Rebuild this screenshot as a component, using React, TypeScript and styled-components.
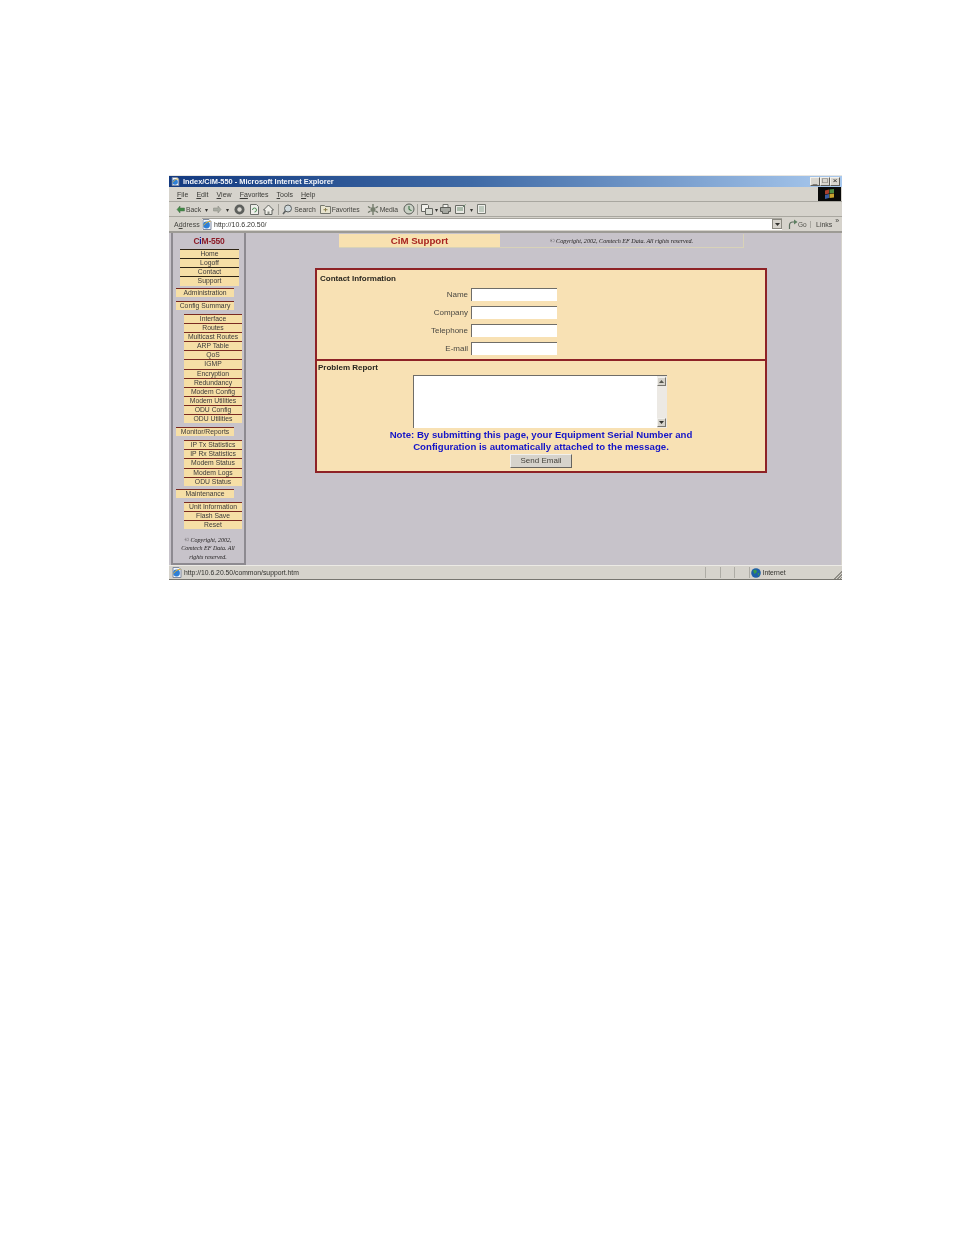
import React, { FunctionComponent } from 'react';
import styled, { createGlobalStyle } from 'styled-components';

const GlobalStyle = createGlobalStyle`
    html, body {
        margin: 0;
        padding: 0;
        background: #ffffff;
    }
    body {
        font-family: "Liberation Sans", Arial, sans-serif;
    }
`;

const MAIN_LINKS = ['Home', 'Logoff', 'Contact', 'Support'];
const CONFIG_LINKS = [
    'Interface',
    'Routes',
    'Multicast Routes',
    'ARP Table',
    'QoS',
    'IGMP',
    'Encryption',
    'Redundancy',
    'Modem Config',
    'Modem Utilities',
    'ODU Config',
    'ODU Utilities',
];
const MONITOR_LINKS = ['IP Tx Statistics', 'IP Rx Statistics', 'Modem Status', 'Modem Logs', 'ODU Status'];
const MAINTENANCE_LINKS = ['Unit Information', 'Flash Save', 'Reset'];
const CONTACT_FIELDS = ['Name', 'Company', 'Telephone', 'E-mail'];
const MENU_ITEMS = [
    ['F', 'ile'],
    ['E', 'dit'],
    ['V', 'iew'],
    ['Fa', 'vorites'],
    ['T', 'ools'],
    ['H', 'elp'],
];

const PageIcon: FunctionComponent = () => (
    <svg width="10" height="11" viewBox="0 0 10 11">
        <path d="M1 .5h6l2 2v8H1z" fill="#f4f6fb" stroke="#7f8aa0" />
        <circle cx="4.5" cy="6" r="3.4" fill="#2f7fd6" />
        <path d="M1.5 6.5c2-3 5-4.500 7-4" fill="none" stroke="#e0b030" />
    </svg>
);

const BackIcon: FunctionComponent = () => (
    <svg width="9" height="9" viewBox="0 0 9 9">
        <path d="M4 1 1 4.500 4 8V6h4.500V3H4z" fill="#3f8a44" stroke="#4c6f4e" strokeWidth=".5" />
    </svg>
);

const ForwardIcon: FunctionComponent = () => (
    <svg width="9" height="9" viewBox="0 0 9 9">
        <path d="M5 1l3 3.500L5 8V6H.5V3H5z" fill="#a9aca3" stroke="#85877f" strokeWidth=".5" />
    </svg>
);

const StopIcon: FunctionComponent = () => (
    <svg width="11" height="11" viewBox="0 0 11 11">
        <circle cx="5.500" cy="5.500" r="5" fill="#5d5f5c" />
        <circle cx="5.500" cy="5.500" r="2.200" fill="#d8d6cf" />
    </svg>
);

const RefreshIcon: FunctionComponent = () => (
    <svg width="11" height="11" viewBox="0 0 11 11">
        <path d="M1.500.5h6l2 2v8h-8z" fill="#eeeeea" stroke="#6c6e6a" />
        <path d="M3.500 6a2 2 0 1 1 2 2" fill="none" stroke="#4d8f55" />
    </svg>
);

const HomeIcon: FunctionComponent = () => (
    <svg width="11" height="11" viewBox="0 0 11 11">
        <path d="M5.500 1 .5 6h1.500v4.500h7V6h1.500z" fill="#f0efe9" stroke="#5e605c" />
        <path d="M4.500 10.500v-3h2v3" fill="#8a8c85" />
    </svg>
);

const SearchIcon: FunctionComponent = () => (
    <svg width="11" height="11" viewBox="0 0 11 11">
        <circle cx="6" cy="4.500" r="3.500" fill="#cfd9dc" stroke="#5b5f5f" />
        <path d="M3.500 7 1 10" stroke="#5b5f5f" strokeWidth="1.600" />
    </svg>
);

const FavoritesIcon: FunctionComponent = () => (
    <svg width="11" height="10" viewBox="0 0 11 10">
        <path d="M.5 1.500h4l1 1h5v7h-10z" fill="#e8e4cf" stroke="#75776f" />
        <path d="M5.500 4v3.500M3.500 5.700h4" stroke="#8a7f4e" />
    </svg>
);

const MediaIcon: FunctionComponent = () => (
    <svg width="12" height="11" viewBox="0 0 12 11">
        <circle cx="6" cy="5.500" r="2.500" fill="#77806f" />
        <path d="M6 0v3M6 8v3M1 2.500l2.500 1.500M11 8.500 8.500 7M1 8.500 3.500 7M11 2.500 8.500 4" stroke="#6c7465" strokeWidth="1.300" />
    </svg>
);

const HistoryIcon: FunctionComponent = () => (
    <svg width="12" height="12" viewBox="0 0 12 12">
        <circle cx="6" cy="6" r="5" fill="#c9d0c4" stroke="#5a5d58" />
        <path d="M6 3v3.500l2.500 1" fill="none" stroke="#2f6b3a" />
    </svg>
);

const MailIcon: FunctionComponent = () => (
    <svg width="12" height="11" viewBox="0 0 12 11">
        <path d="M.5.500h6l1 1v6h-7z" fill="#f2f1ec" stroke="#666862" />
        <path d="M4.500 4.500h7v6h-7z" fill="#d9dbd3" stroke="#666862" />
    </svg>
);

const PrintIcon: FunctionComponent = () => (
    <svg width="11" height="10" viewBox="0 0 11 10">
        <path d="M3 .5h5v3H3z" fill="#f3f3ef" stroke="#6f716b" />
        <path d="M.5 3.500h10v4h-2v2h-6v-2h-2z" fill="#a6a8a1" stroke="#5d5f59" />
    </svg>
);

const EditIcon: FunctionComponent = () => (
    <svg width="11" height="10" viewBox="0 0 11 10">
        <path d="M.5 1.500h9v8h-9z" fill="#e9e9e4" stroke="#6a6c66" />
        <path d="M2 4h6M2 6h6M8 3l2.500-2.500" stroke="#6d8d71" />
    </svg>
);

const DiscussIcon: FunctionComponent = () => (
    <svg width="9" height="10" viewBox="0 0 9 10">
        <path d="M.5.500h8v9h-8z" fill="#eeeeea" stroke="#777972" />
        <path d="M2 3h5M2 5h5M2 7h5" stroke="#8fa591" />
    </svg>
);

const GoIcon: FunctionComponent = () => (
    <svg width="10" height="11" viewBox="0 0 10 11">
        <path d="M1.500 10V6a3 3 0 0 1 3-3h3" fill="none" stroke="#5c6f5f" strokeWidth="1.200" />
        <path d="M6 .5 9.500 3 6 5.500z" fill="#5c7f60" />
    </svg>
);

const GlobeIcon: FunctionComponent = () => (
    <svg width="10" height="10" viewBox="0 0 10 10">
        <circle cx="5" cy="5" r="4.800" fill="#1d5fa8" />
        <path d="M2 2.500 5 1.500 6 4 3.500 6zM6.500 5.500 8.500 5 7.500 8z" fill="#3d9a46" />
    </svg>
);

const FlagIcon: FunctionComponent = () => (
    <svg width="11" height="10" viewBox="0 0 11 10">
        <path d="M1 1.500 5 .5v4l-4 1z" fill="#a8402f" />
        <path d="M5.500.5 10 0v4l-4.500.5z" fill="#4e8c42" />
        <path d="M1 6l4-1v4l-4 1z" fill="#3a5ca0" />
        <path d="M5.500 5 10 4.500v4L5.500 9z" fill="#c8a22e" />
    </svg>
);

const ArrowUp: FunctionComponent = () => (
    <svg width="5" height="3" viewBox="0 0 5 3">
        <path d="M2.500 0 5 3H0z" fill="#55564f" />
    </svg>
);

const ArrowDown: FunctionComponent = () => (
    <svg width="5" height="3" viewBox="0 0 5 3">
        <path d="M0 0h5L2.500 3z" fill="#33332f" />
    </svg>
);

const NavGroup: FunctionComponent<{ links: string[]; $kind: 'main' | 'sub' }> = ({ links, $kind }) => (
    <NavList $kind={$kind}>
        {links.map((link) => (
            <NavLink key={link} $kind={$kind}>
                {link}
            </NavLink>
        ))}
    </NavList>
);

export default function App() {
    return (
        <Page>
            <GlobalStyle />
            <BrowserWindow>
                <TitleBar>
                    <TitleText>
                        <PageIcon />
                        Index/CiM-550 - Microsoft Internet Explorer
                    </TitleText>
                    <WindowButtons>
                        <WindowButton>_</WindowButton>
                        <WindowButton>□</WindowButton>
                        <WindowButton>×</WindowButton>
                    </WindowButtons>
                </TitleBar>
                <MenuBar>
                    {MENU_ITEMS.map(([key, rest]) => (
                        <MenuItem key={key}>
                            <u>{key}</u>
                            {rest}
                        </MenuItem>
                    ))}
                    <Throbber>
                        <FlagIcon />
                    </Throbber>
                </MenuBar>
                <ToolBar>
                    <ToolButton><BackIcon />Back</ToolButton>
                    <DropCaret>▾</DropCaret>
                    <ToolButton $gap={5}><ForwardIcon /></ToolButton>
                    <DropCaret>▾</DropCaret>
                    <ToolButton $gap={5}><StopIcon /></ToolButton>
                    <ToolButton $gap={4}><RefreshIcon /></ToolButton>
                    <ToolButton $gap={3}><HomeIcon /></ToolButton>
                    <ToolSeparator $left={4} />
                    <ToolButton><SearchIcon />Search</ToolButton>
                    <ToolButton $gap={4}><FavoritesIcon />Favorites</ToolButton>
                    <ToolButton $gap={7}><MediaIcon />Media</ToolButton>
                    <ToolButton $gap={5}><HistoryIcon /></ToolButton>
                    <ToolSeparator $left={2} />
                    <ToolButton><MailIcon /></ToolButton>
                    <DropCaret $gap={2}>▾</DropCaret>
                    <ToolButton $gap={2}><PrintIcon /></ToolButton>
                    <ToolButton $gap={4}><EditIcon /></ToolButton>
                    <DropCaret>▾</DropCaret>
                    <ToolButton $gap={4}><DiscussIcon /></ToolButton>
                </ToolBar>
                <AddressBar>
                    <AddressLabel>
                        A<u>d</u>dress
                    </AddressLabel>
                    <AddressField>
                        <PageIcon />
                        http://10.6.20.50/
                        <ComboButton><ArrowDown /></ComboButton>
                    </AddressField>
                    <GoButton><GoIcon />Go</GoButton>
                    <LinksButton>Links<sup>»</sup></LinksButton>
                </AddressBar>
                <Viewport>
                    <Sidebar>
                        <Brand>
                            C<BrandSlash>i</BrandSlash>M-550
                        </Brand>
                        <NavGroup links={MAIN_LINKS} $kind="main" />
                        <SectionLink $top={2.5}>Administration</SectionLink>
                        <SectionLink $top={4}>Config Summary</SectionLink>
                        <NavGroup links={CONFIG_LINKS} $kind="sub" />
                        <SectionLink $top={4}>Monitor/Reports</SectionLink>
                        <NavGroup links={MONITOR_LINKS} $kind="sub" />
                        <SectionLink $top={3}>Maintenance</SectionLink>
                        <NavGroup links={MAINTENANCE_LINKS} $kind="sub" />
                        <SideCopyright>© Copyright, 2002, Comtech EF Data. All rights reserved.</SideCopyright>
                    </Sidebar>
                    <Main>
                        <HeaderStrip>
                            <PageTitle>CiM Support</PageTitle>
                            <HeaderCopyright>© Copyright, 2002, Comtech EF Data. All rights reserved.</HeaderCopyright>
                        </HeaderStrip>
                        <FormBox>
                            <ContactSection>
                                <ContactHeading>Contact Information</ContactHeading>
                                <FieldGrid>
                                    {CONTACT_FIELDS.map((field) => (
                                        <React.Fragment key={field}>
                                            <FieldLabel>{field}</FieldLabel>
                                            <TextInput />
                                        </React.Fragment>
                                    ))}
                                </FieldGrid>
                            </ContactSection>
                            <ReportSection>
                                <ReportHeading>Problem Report</ReportHeading>
                                <TextArea>
                                    <ScrollTrack>
                                        <ScrollButton><ArrowUp /></ScrollButton>
                                        <ScrollButton><ArrowDown /></ScrollButton>
                                    </ScrollTrack>
                                </TextArea>
                                <Note>
                                    Note: By submitting this page, your Equipment Serial Number and
                                    <br />
                                    Configuration is automatically attached to the message.
                                </Note>
                                <SendButton>Send Email</SendButton>
                            </ReportSection>
                        </FormBox>
                    </Main>
                </Viewport>
                <StatusBar>
                    <StatusUrl>
                        <PageIcon />
                        http://10.6.20.50/common/support.htm
                    </StatusUrl>
                    <StatusCell />
                    <StatusCell />
                    <StatusCell />
                    <ZoneCell>
                        <GlobeIcon />
                        Internet
                    </ZoneCell>
                    <Grip />
                </StatusBar>
            </BrowserWindow>
        </Page>
    );
}

const Page = styled.div`
    width: 954px;
    height: 1235px;
    box-sizing: border-box;
    padding: 175px 0 0 169px;
    overflow: hidden;
`;

const BrowserWindow = styled.div`
    width: 673px;
    height: 405px;
    box-sizing: border-box;
    display: flex;
    flex-direction: column;
    background: #d6d3cc;
    border-top: 1px solid #e8e6e1;
    border-bottom: 1px solid #77756f;
    color: #33332f;
    font-size: 7px;
    filter: blur(0.4px);
`;

const TitleBar = styled.div`
    height: 11px;
    flex: none;
    display: flex;
    align-items: center;
    justify-content: space-between;
    padding: 0 2px;
    background: linear-gradient(90deg, #133a80 0%, #3f6aa6 45%, #a9c9ee 100%);
`;

const TitleText = styled.div`
    display: flex;
    align-items: center;
    gap: 3px;
    font-size: 7.400px;
    font-weight: 700;
    color: #f4f6fa;
    & > svg {
        width: 9px;
        height: 9px;
    }
`;

const WindowButtons = styled.div`
    display: flex;
    gap: 0;
`;

const WindowButton = styled.div`
    width: 10px;
    height: 9px;
    box-sizing: border-box;
    background: #d8d5ce;
    border: 1px solid;
    border-color: #f2f1ed #5f5e59 #5f5e59 #f2f1ed;
    color: #1c1c1a;
    font-size: 8px;
    line-height: 6px;
    text-align: center;
`;

const MenuBar = styled.div`
    height: 15px;
    flex: none;
    box-sizing: border-box;
    display: flex;
    align-items: center;
    padding-left: 8px;
    gap: 8.100px;
    position: relative;
    border-bottom: 1px solid #a9a7a0;
`;

const MenuItem = styled.span`
    font-size: 7px;
    color: #3b3b37;
`;

const Throbber = styled.div`
    width: 23px;
    height: 14px;
    position: absolute;
    right: 1px;
    top: 0;
    background: #090908;
    display: flex;
    align-items: center;
    justify-content: center;
`;

const ToolBar = styled.div`
    height: 15px;
    flex: none;
    box-sizing: border-box;
    display: flex;
    align-items: center;
    padding-left: 7px;
    border-bottom: 1px solid #a9a7a0;
`;

const ToolButton = styled.div<{ $gap?: number }>`
    display: flex;
    align-items: center;
    gap: 1px;
    margin-left: ${({ $gap }) => $gap ?? 0}px;
    font-size: 6.800px;
    color: #44443f;
`;

const DropCaret = styled.span<{ $gap?: number }>`
    margin-left: ${({ $gap }) => $gap ?? 4}px;
    font-size: 6px;
    color: #33332f;
`;

const ToolSeparator = styled.div<{ $left: number }>`
    width: 1px;
    height: 11px;
    margin: 0 3px 0 ${({ $left }) => $left}px;
    background: #a3a19a;
`;

const AddressBar = styled.div`
    height: 16px;
    flex: none;
    box-sizing: border-box;
    display: flex;
    align-items: center;
    padding-left: 5px;
    border-bottom: 2px solid #9d9b95;
`;

const AddressLabel = styled.span`
    width: 28px;
    flex: none;
    font-size: 7px;
    color: #44443f;
`;

const AddressField = styled.div`
    width: 580px;
    height: 12px;
    flex: none;
    box-sizing: border-box;
    display: flex;
    align-items: center;
    gap: 2px;
    position: relative;
    background: #ffffff;
    font-size: 7px;
    color: #33332f;
    border-top: 1px solid #a6a49d;
`;

const ComboButton = styled.div`
    width: 10px;
    height: 10px;
    position: absolute;
    right: 0;
    top: 0;
    background: #d6d3cc;
    border: 1px solid #8a8880;
    box-sizing: border-box;
    display: flex;
    align-items: center;
    justify-content: center;
`;

const GoButton = styled.div`
    width: 22px;
    flex: none;
    display: flex;
    align-items: center;
    gap: 0;
    margin-left: 6px;
    font-size: 6.500px;
    color: #55554f;
`;

const LinksButton = styled.div`
    flex: none;
    padding-left: 5px;
    border-left: 1px solid #a9a7a0;
    font-size: 7px;
    color: #44443f;
    & > sup {
        font-size: 7px;
        line-height: 0;
        margin-left: 3px;
    }
`;

const Viewport = styled.div`
    flex: 1;
    min-height: 0;
    display: flex;
    background: #c7c3ca;
    border-right: 1px solid #d6d3cc;
`;

const Sidebar = styled.aside`
    width: 75px;
    flex: none;
    box-sizing: border-box;
    margin-left: 2px;
    display: flex;
    flex-direction: column;
    border-style: solid;
    border-color: #8d8a90;
    border-width: 0 2px 2px 2px;
    padding-top: 3px;
    color: #3c3a3a;
`;

const Brand = styled.div`
    width: 64px;
    margin-left: 4px;
    text-align: center;
    font-size: 8.500px;
    font-weight: 700;
    line-height: 10px;
    color: #8c1c28;
    letter-spacing: -0.2px;
`;

const BrandSlash = styled.span`
    color: #1a1a96;
`;

const NavList = styled.div<{ $kind: 'main' | 'sub' }>`
    display: flex;
    flex-direction: column;
    width: ${({ $kind }) => ($kind === 'main' ? 59 : 58)}px;
    margin-left: ${({ $kind }) => ($kind === 'main' ? 7 : 11)}px;
    margin-top: ${({ $kind }) => ($kind === 'main' ? 3 : 3.7)}px;
`;

const NavLink = styled.div<{ $kind: 'main' | 'sub' }>`
    height: 9.150px;
    box-sizing: border-box;
    border-top: 1px solid ${({ $kind }) => ($kind === 'main' ? '#2e2414' : '#7a2a22')};
    background: #f6dfa6;
    font-size: 6.800px;
    line-height: 8px;
    text-align: center;
    white-space: nowrap;
`;

const SectionLink = styled.div<{ $top: number }>`
    width: 58px;
    height: 9px;
    margin: ${({ $top }) => $top}px 0 0 3px;
    box-sizing: border-box;
    border-top: 1px solid #7a2a22;
    background: #f6dfa6;
    font-size: 6.800px;
    line-height: 8px;
    text-align: center;
    white-space: nowrap;
`;

const SideCopyright = styled.div`
    width: 60px;
    margin: 7px 0 0 5px;
    font-family: "Liberation Serif", "Times New Roman", serif;
    font-style: italic;
    font-size: 6px;
    line-height: 8.500px;
    text-align: center;
    color: #1c1a1a;
`;

const Main = styled.main`
    flex: 1;
    min-width: 0;
    padding: 1px 0 0 69px;
`;

const HeaderStrip = styled.div`
    width: 405px;
    height: 14px;
    margin-left: 24px;
    display: flex;
    box-sizing: border-box;
    border-right: 1px solid #d8d2b8;
    border-bottom: 1px solid #d8d2b8;
`;

const PageTitle = styled.div`
    width: 161px;
    flex: none;
    background: #f8e1b0;
    color: #a82420;
    font-size: 9.700px;
    font-weight: 700;
    line-height: 13px;
    text-align: center;
`;

const HeaderCopyright = styled.div`
    flex: 1;
    font-family: "Liberation Serif", "Times New Roman", serif;
    font-style: italic;
    font-size: 6.100px;
    line-height: 14px;
    text-align: center;
    color: #1c1a1a;
`;

const FormBox = styled.section`
    width: 452px;
    height: 205px;
    margin-top: 20px;
    box-sizing: border-box;
    display: flex;
    flex-direction: column;
    background: #f8e1b4;
    border: 2px solid #8e2226;
    color: #44423c;
`;

const ContactSection = styled.div`
    height: 91px;
    flex: none;
    box-sizing: border-box;
    padding: 4px 0 0 3px;
    border-bottom: 2px solid #8e2226;
`;

const ContactHeading = styled.div`
    font-size: 8px;
    font-weight: 700;
    line-height: 9px;
    color: #2a2720;
`;

const FieldGrid = styled.div`
    display: grid;
    grid-template-columns: 148px 86px;
    grid-auto-rows: 18.200px;
    column-gap: 3px;
    margin-top: 2px;
    align-items: center;
`;

const FieldLabel = styled.div`
    font-size: 8px;
    text-align: right;
    color: #4a4842;
`;

const TextInput = styled.div`
    height: 13px;
    box-sizing: border-box;
    background: #ffffff;
    border-top: 1px solid #6f6d68;
    border-left: 1px solid #6f6d68;
`;

const ReportSection = styled.div`
    flex: 1;
    min-height: 0;
    display: flex;
    flex-direction: column;
    align-items: center;
    position: relative;
`;

const ReportHeading = styled.div`
    align-self: flex-start;
    margin: 2px 0 0 1px;
    font-size: 8px;
    font-weight: 700;
    line-height: 9px;
    color: #2a2720;
`;

const TextArea = styled.div`
    width: 254px;
    height: 53px;
    margin: 3px 0 0 -2px;
    flex: none;
    box-sizing: border-box;
    display: flex;
    justify-content: flex-end;
    background: #ffffff;
    border-top: 1px solid #6f6d68;
    border-left: 1px solid #6f6d68;
`;

const ScrollTrack = styled.div`
    width: 10px;
    display: flex;
    flex-direction: column;
    justify-content: space-between;
    background: #ece9e4;
    padding: 1px 0;
`;

const ScrollButton = styled.div`
    width: 9px;
    height: 9px;
    box-sizing: border-box;
    background: #d6d3cc;
    border: 1px solid;
    border-color: #f1f0ec #77756f #77756f #f1f0ec;
    display: flex;
    align-items: center;
    justify-content: center;
`;

const Note = styled.div`
    margin: 1px 0 0 0;
    font-size: 9.650px;
    font-weight: 700;
    line-height: 11.500px;
    text-align: center;
    color: #1414c8;
    white-space: nowrap;
`;

const SendButton = styled.div`
    width: 62px;
    height: 14px;
    margin-top: 2px;
    box-sizing: border-box;
    background: #d6d3cc;
    border: 1px solid;
    border-color: #f1f0ec #66645f #66645f #f1f0ec;
    font-size: 8px;
    line-height: 12px;
    text-align: center;
    color: #44423c;
`;

const StatusBar = styled.div`
    height: 14px;
    flex: none;
    box-sizing: border-box;
    display: flex;
    align-items: center;
    border-top: 1px solid #eceae5;
    background: #d6d3cc;
    position: relative;
`;

const StatusUrl = styled.div`
    width: 536px;
    flex: none;
    display: flex;
    align-items: center;
    gap: 2px;
    padding-left: 3px;
    box-sizing: border-box;
    font-size: 6.800px;
    color: #33332f;
`;

const StatusCell = styled.div`
    width: 14.500px;
    height: 11px;
    flex: none;
    box-sizing: border-box;
    border-left: 1px solid #aeaca5;
`;

const ZoneCell = styled.div`
    flex: 1;
    height: 11px;
    display: flex;
    align-items: center;
    gap: 2px;
    padding-left: 1px;
    border-left: 1px solid #aeaca5;
    font-size: 6.800px;
    color: #33332f;
`;

const Grip = styled.div`
    width: 9px;
    height: 9px;
    position: absolute;
    right: 0;
    bottom: 0;
    background: repeating-linear-gradient(135deg, #d6d3cc 0 1px, #8f8d86 1px 2px);
    clip-path: polygon(100% 0, 100% 100%, 0 100%);
`;
